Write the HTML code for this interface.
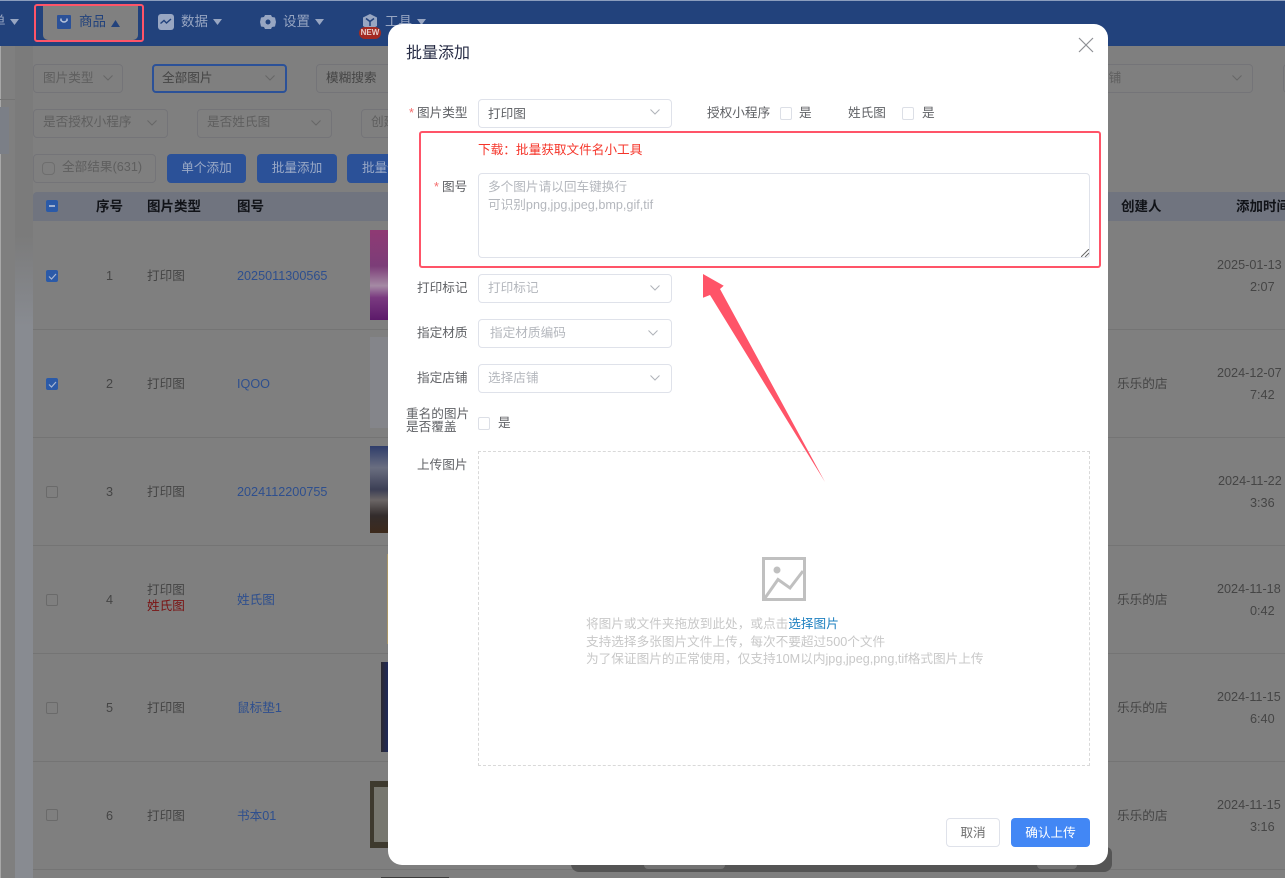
<!DOCTYPE html>
<html><head><meta charset="utf-8"><style>
html,body{margin:0;padding:0}
body{width:1285px;height:878px;overflow:hidden;position:relative;background:#7f7f7f;font-family:"Liberation Sans","Noto Sans CJK SC",sans-serif;font-size:12.65px;color:#4a4a4a}
div,span,svg{position:absolute;box-sizing:border-box}
.t{white-space:nowrap;line-height:16px}
.s{border:1px solid #747478;border-radius:4px;background:#7f7f7f}
.g{color:#5f5f5f}
.d{color:#454545}
.h{color:#111318;font-weight:700;font-size:13.5px}
.l{color:#2e4f8e}
.b{background:#2b5198;border-radius:4px;color:#9aa9c6;text-align:center;line-height:28px;height:29px}
.c{width:12px;height:12px;border:1px solid #6a6a6a;border-radius:2px;left:46px}
.k{background:#2b5aa8;border-color:#2b5aa8}
.line{left:33px;right:0;height:1px;background:#747474}
.m{color:#606266}
.ph{color:#b4b7bd}
.i{background:#fff;border:1px solid #dfe2ea;border-radius:4px;left:478px;width:194px;height:29px}
.n{color:#98a6c2;font-size:13.5px}
.cb{width:12px;height:13px;border:1px solid #dcdfe6;border-radius:2px;background:#fff}
.r{color:#f56c6c}
</style></head><body>
<!-- top bar -->
<div style="left:0;top:0;width:1285px;height:46px;background:#22427c"></div>
<div style="left:0;top:0;width:1285px;height:1px;background:#8b9dbd"></div>
<div class="t n" style="left:-8px;top:14px">单</div>
<svg style="left:10px;top:19px" width="9" height="7"><path d="M0 0H9L4.500 6Z" fill="#98a6c2"/></svg>
<div style="left:43px;top:5px;width:95px;height:35px;background:#808080;border-radius:0 0 5px 5px"></div>
<svg style="left:57px;top:15px" width="14" height="14"><rect width="14" height="14" rx="1" fill="#2b5198"/><path d="M4 3.500V5.500Q7 8.500 10 5.500V3.500" fill="none" stroke="#b8c4dc" stroke-width="1.500"/></svg>
<div class="t" style="left:79px;top:14px;font-size:13.500px;color:#22427c">商品</div>
<svg style="left:111px;top:20px" width="9" height="7"><path d="M0 7H9L4.500 0Z" fill="#22427c"/></svg>
<svg style="left:158px;top:14px" width="16" height="16"><rect width="16" height="16" rx="3" fill="#98a6c2"/><path d="M2.500 9.500L6 6.500L8.500 9L13 5" fill="none" stroke="#22427c" stroke-width="1.400"/></svg>
<div class="t n" style="left:181px;top:14px">数据</div>
<svg style="left:213px;top:19px" width="9" height="7"><path d="M0 0H9L4.500 6Z" fill="#98a6c2"/></svg>
<svg style="left:260px;top:14px" width="16" height="16"><path d="M5 1H11L12 3L15 3.500L16 8L15 12.500L12 13L11 15H5L4 13L1 12.500L0 8L1 3.500L4 3Z" fill="#98a6c2"/><circle cx="8" cy="8" r="2.500" fill="#22427c"/></svg>
<div class="t n" style="left:283px;top:14px">设置</div>
<svg style="left:315px;top:19px" width="9" height="7"><path d="M0 0H9L4.500 6Z" fill="#98a6c2"/></svg>
<svg style="left:362px;top:14px" width="16" height="16"><path d="M8 0L15 3.500V12L8 16L1 12V3.500Z" fill="#98a6c2"/><path d="M4 4.500L8 7.500L12 4.500M8 7.500V12" fill="none" stroke="#22427c" stroke-width="1.500"/></svg>
<div class="t n" style="left:385px;top:14px">工具</div>
<div style="left:359px;top:27px;width:22px;height:12px;border-radius:6px;background:#a32a22;color:#e8cfcb;font:700 8px/12px 'Liberation Sans',sans-serif;text-align:center">NEW</div>
<svg style="left:417px;top:19px" width="9" height="7"><path d="M0 0H9L4.500 6Z" fill="#98a6c2"/></svg>
<div style="left:34px;top:4px;width:110px;height:38px;border:2px solid #ff5468;border-radius:3px"></div>

<!-- side -->
<div style="left:0;top:46px;width:1px;height:832px;background:#a8a8a8"></div>
<div style="left:15px;top:46px;width:18px;height:832px;background:linear-gradient(#7b7b7b 0,#7b7b7b 190px,#888b91 280px)"></div>
<div style="left:0;top:99px;width:15px;height:1px;background:#747474"></div>
<div style="left:0;top:107px;width:9px;height:47px;background:#7b7f87"></div>

<!-- filters -->
<div class="s t g" style="left:33px;top:64px;width:90px;height:29px;padding:5px 9px">图片类型</div>
<svg style="left:103px;top:75px" width="10" height="6"><path d="M.5 .5L5 5L9.500 .5" fill="none" stroke="#666" /></svg>
<div class="s t d" style="left:152px;top:64px;width:135px;height:29px;padding:4px 8px;border:2px solid #2b5198">全部图片</div>
<svg style="left:265px;top:75px" width="10" height="6"><path d="M.5 .5L5 5L9.500 .5" fill="none" stroke="#666" /></svg>
<div class="s t d" style="left:316px;top:64px;width:100px;height:29px;padding:5px 9px">模糊搜索</div>
<div class="s t g" style="left:1000px;top:64px;width:253px;height:29px;padding:5px 9px 5px 95px">店铺</div>
<svg style="left:1232px;top:75px" width="10" height="6"><path d="M.5 .5L5 5L9.500 .5" fill="none" stroke="#666" /></svg>
<div class="s" style="left:1283px;top:64px;width:20px;height:29px"></div>
<div class="s t g" style="left:33px;top:109px;width:135px;height:29px;padding:4px 9px">是否授权小程序</div>
<svg style="left:147px;top:120px" width="10" height="6"><path d="M.5 .5L5 5L9.500 .5" fill="none" stroke="#666" /></svg>
<div class="s t g" style="left:197px;top:109px;width:135px;height:29px;padding:4px 9px">是否姓氏图</div>
<svg style="left:311px;top:120px" width="10" height="6"><path d="M.5 .5L5 5L9.500 .5" fill="none" stroke="#666" /></svg>
<div class="s t g" style="left:361px;top:109px;width:100px;height:29px;padding:4px 9px">创建时间</div>
<div class="s t g" style="left:33px;top:154px;width:123px;height:29px;padding:4px 0 4px 28px">全部结果(631)</div>
<div class="s" style="left:42px;top:162px;width:13px;height:13px;border-color:#6e6e6e"></div>
<div class="b" style="left:167px;top:154px;width:79px">单个添加</div>
<div class="b" style="left:257px;top:154px;width:80px">批量添加</div>
<div class="b" style="left:347px;top:154px;width:80px;text-align:left;padding-left:15px">批量修改</div>

<!-- table -->
<div style="left:33px;top:192px;width:1252px;height:29px;background:#70747f;border-radius:4px 0 0 0"></div>
<div class="c k" style="top:200px"><div style="left:2px;top:4px;width:6px;height:2px;background:#9fb0d0"></div></div>
<div class="t h" style="left:96px;top:199px">序号</div>
<div class="t h" style="left:147px;top:199px">图片类型</div>
<div class="t h" style="left:237px;top:199px">图号</div>
<div class="t h" style="left:1121px;top:199px">创建人</div>
<div class="t h" style="left:1236px;top:199px">添加时间</div>

<div class="line" style="top:329px"></div><div class="line" style="top:437px"></div><div class="line" style="top:545px"></div><div class="line" style="top:653px"></div><div class="line" style="top:761px"></div><div class="line" style="top:869px"></div>

<div class="c k" style="top:270px"><svg style="left:1px;top:2px" width="9" height="7"><path d="M1 3.500L3.500 6L8 1" fill="none" stroke="#a9b8d4" stroke-width="1.200"/></svg></div>
<div class="c k" style="top:378px"><svg style="left:1px;top:2px" width="9" height="7"><path d="M1 3.500L3.500 6L8 1" fill="none" stroke="#a9b8d4" stroke-width="1.200"/></svg></div>
<div class="c" style="top:486px"></div><div class="c" style="top:594px"></div><div class="c" style="top:702px"></div><div class="c" style="top:809px"></div>

<div class="t d" style="left:106px;top:268px">1</div><div class="t d" style="left:106px;top:376px">2</div><div class="t d" style="left:106px;top:484px">3</div><div class="t d" style="left:106px;top:592px">4</div><div class="t d" style="left:106px;top:700px">5</div><div class="t d" style="left:106px;top:808px">6</div>
<div class="t d" style="left:147px;top:268px">打印图</div><div class="t d" style="left:147px;top:376px">打印图</div><div class="t d" style="left:147px;top:484px">打印图</div>
<div class="t d" style="left:147px;top:582px">打印图</div><div class="t" style="left:147px;top:598px;color:#7a1414">姓氏图</div>
<div class="t d" style="left:147px;top:700px">打印图</div><div class="t d" style="left:147px;top:808px">打印图</div>
<div class="t l" style="left:237px;top:268px">2025011300565</div><div class="t l" style="left:237px;top:376px">IQOO</div><div class="t l" style="left:237px;top:484px">2024112200755</div><div class="t l" style="left:237px;top:592px">姓氏图</div><div class="t l" style="left:237px;top:700px">鼠标垫1</div><div class="t l" style="left:237px;top:808px">书本01</div>

<div style="left:370px;top:230px;width:20px;height:90px;background:linear-gradient(#8f3a74,#7c3d78 40%,#a58aa4 62%,#7a3a80 75%,#5c1a6a)"></div>
<div style="left:370px;top:337px;width:20px;height:91px;background:#84858a"></div>
<div style="left:370px;top:446px;width:20px;height:87px;background:linear-gradient(#2f3d6a,#6a6e80 25%,#3c3f55 50%,#6b6666 62%,#332c2c 80%,#3d2a1c)"></div>
<div style="left:387px;top:554px;width:3px;height:90px;background:#a99668"></div>
<div style="left:381px;top:662px;width:9px;height:90px;background:linear-gradient(90deg,#2c2a30,#1c2a66)"></div>
<div style="left:370px;top:781px;width:20px;height:67px;background:#3e3a2e"></div>
<div style="left:374px;top:787px;width:16px;height:55px;background:#77776f"></div>
<div style="left:381px;top:877px;width:68px;height:1px;background:#3c3c3c"></div>

<div class="t d" style="left:1117px;top:376px">乐乐的店</div><div class="t d" style="left:1117px;top:592px">乐乐的店</div><div class="t d" style="left:1117px;top:700px">乐乐的店</div><div class="t d" style="left:1117px;top:808px">乐乐的店</div>
<div class="t d" style="left:1217px;top:257px">2025-01-13</div><div class="t d" style="left:1250px;top:279px">2:07</div>
<div class="t d" style="left:1217px;top:365px">2024-12-07</div><div class="t d" style="left:1250px;top:387px">7:42</div>
<div class="t d" style="left:1218px;top:473px">2024-11-22</div><div class="t d" style="left:1250px;top:495px">3:36</div>
<div class="t d" style="left:1217px;top:581px">2024-11-18</div><div class="t d" style="left:1250px;top:603px">0:42</div>
<div class="t d" style="left:1217px;top:689px">2024-11-15</div><div class="t d" style="left:1250px;top:711px">6:40</div>
<div class="t d" style="left:1217px;top:797px">2024-11-15</div><div class="t d" style="left:1250px;top:819px">3:16</div>

<!-- dark bar behind modal -->
<div style="left:571px;top:847px;width:541px;height:25px;background:#555;border-radius:0 6px 8px 8px"></div>
<div style="left:644px;top:860px;width:81px;height:9px;background:#727272;border-radius:0 0 4px 4px"></div>
<div style="left:1037px;top:860px;width:40px;height:9px;background:#727272;border-radius:0 0 4px 4px"></div>

<!-- modal -->
<div style="left:388px;top:24px;width:720px;height:841px;background:#fff;border-radius:14px"></div>
<div class="t" style="left:406px;top:45px;font-size:16px;line-height:18px;color:#272c45">批量添加</div>
<svg style="left:1078px;top:37px" width="16" height="16"><path d="M1 1L15 15M15 1L1 15" stroke="#8e9095" stroke-width="1.200" fill="none"/></svg>

<div class="t r" style="left:409px;top:105px">*</div>
<div class="t m" style="left:417px;top:105px">图片类型</div>
<div class="i t" style="top:99px;padding:6px 9px;color:#606266">打印图</div>
<svg style="left:650px;top:109px" width="10" height="6"><path d="M.5 .5L5 5L9.500 .5" fill="none" stroke="#b0b3b9"/></svg>
<div class="t m" style="left:707px;top:105px">授权小程序</div>
<div class="cb" style="left:780px;top:107px"></div>
<div class="t m" style="left:799px;top:105px">是</div>
<div class="t m" style="left:848px;top:105px">姓氏图</div>
<div class="cb" style="left:902px;top:107px"></div>
<div class="t m" style="left:922px;top:105px">是</div>

<div class="t" style="left:478px;top:142px;color:#f5352a">下载：批量获取文件名小工具</div>
<div class="t r" style="left:434px;top:179px">*</div>
<div class="t m" style="left:442px;top:179px">图号</div>
<div style="left:478px;top:173px;width:612px;height:85px;background:#fff;border:1px solid #dfe2ea;border-radius:4px"></div>
<div class="t ph" style="left:488px;top:178px;line-height:18px;color:#b4b7bd">多个图片请以回车键换行<br>可识别png,jpg,jpeg,bmp,gif,tif</div>
<svg style="left:1081px;top:249px" width="8" height="8"><path d="M0 8L8 0M4 8L8 4" stroke="#666" stroke-width="1" fill="none"/></svg>
<div style="left:419px;top:131px;width:682px;height:137px;border:2px solid #ff5468;border-radius:3px"></div>

<div class="t m" style="left:417px;top:280px">打印标记</div>
<div class="i t ph" style="top:274px;padding:5px 9px">打印标记</div>
<svg style="left:650px;top:285px" width="10" height="6"><path d="M.5 .5L5 5L9.500 .5" fill="none" stroke="#b0b3b9"/></svg>
<div class="t m" style="left:417px;top:325px">指定材质</div>
<div class="i t ph" style="top:319px;padding:5px 11px">指定材质编码</div>
<svg style="left:648px;top:330px" width="10" height="6"><path d="M.5 .5L5 5L9.500 .5" fill="none" stroke="#b0b3b9"/></svg>
<div class="t m" style="left:417px;top:370px">指定店铺</div>
<div class="i t ph" style="top:364px;padding:5px 9px">选择店铺</div>
<svg style="left:650px;top:375px" width="10" height="6"><path d="M.5 .5L5 5L9.500 .5" fill="none" stroke="#b0b3b9"/></svg>
<div class="t m" style="left:406px;top:408px;line-height:13px">重名的图片<br>是否覆盖</div>
<div class="cb" style="left:478px;top:417px"></div>
<div class="t m" style="left:498px;top:415px">是</div>
<div class="t m" style="left:417px;top:457px">上传图片</div>
<div style="left:478px;top:451px;width:612px;height:315px;border:1px dashed #d9d9d9"></div>
<svg style="left:762px;top:557px" width="44" height="44" viewBox="0 0 44 44"><path d="M1.500 1.500H42.500V42.500H1.500Z" fill="none" stroke="#c0c0c0" stroke-width="3"/><circle cx="15" cy="13" r="3.500" fill="#c0c0c0"/><path d="M3 41L16 22.500L28 31L41 14" fill="none" stroke="#c0c0c0" stroke-width="3"/></svg>
<div class="t" style="left:586px;top:616px;color:#c8c8c8;line-height:17.500px">将图片或文件夹拖放到此处，或点击<span style="position:static;color:#1e80c0">选择图片</span><br>支持选择多张图片文件上传，每次不要超过500个文件<br>为了保证图片的正常使用，仅支持10M以内jpg,jpeg,png,tif格式图片上传</div>

<svg style="left:700px;top:270px" width="130" height="216"><path d="M3 4L23.700 15.700L20 19L125 212L10 25L3 27.700Z" fill="#ff5468"/></svg>

<div class="t" style="left:946px;top:818px;width:54px;height:29px;border:1px solid #dfe2ea;border-radius:4px;background:#fff;color:#707070;text-align:center;line-height:28px">取消</div>
<div class="t" style="left:1011px;top:818px;width:79px;height:29px;border-radius:4px;background:#4287f5;color:#fff;text-align:center;line-height:30px">确认上传</div>
</body></html>
